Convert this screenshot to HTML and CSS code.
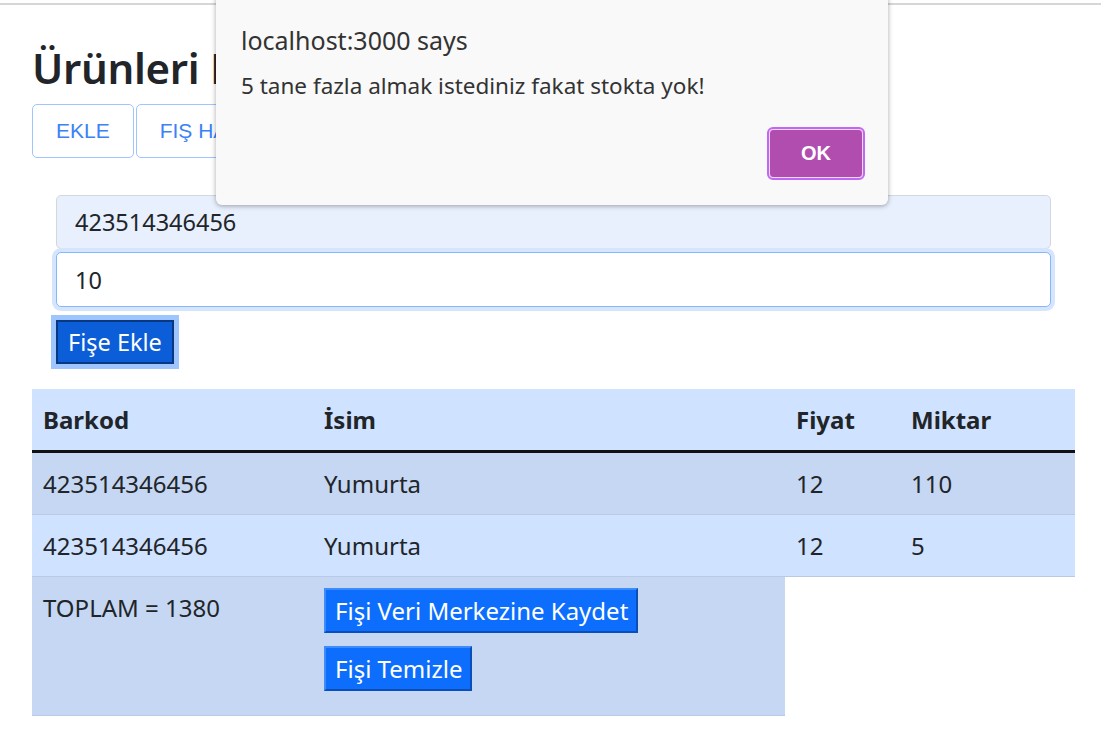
FILE: index.html
```html
<!DOCTYPE html>
<html lang="tr">
<head>
<meta charset="utf-8">
<title>Ürünleri Fişe Ekle</title>
<link rel="stylesheet" href="styles.css">
</head>
<body>
<div class="page">
  <div class="container">
    <h2 class="title">Ürünleri Fişe Ekle</h2>
    <div class="nav">
      <button class="nav-btn">EKLE</button>
      <button class="nav-btn">FIŞ HAREKETLERİ</button>
    </div>
    <form class="form">
      <input class="field field-auto" type="text" value="423514346456">
      <input class="field field-focus" type="text" value="10">
      <div class="form-actions"><button type="button" class="add-btn">Fişe Ekle</button></div>
    </form>
    <table class="receipt">
      <thead>
        <tr><th class="c-barkod">Barkod</th><th class="c-isim">İsim</th><th class="c-fiyat">Fiyat</th><th class="c-miktar">Miktar</th></tr>
      </thead>
      <tbody>
        <tr class="odd"><td>423514346456</td><td>Yumurta</td><td>12</td><td>110</td></tr>
        <tr class="even"><td>423514346456</td><td>Yumurta</td><td>12</td><td>5</td></tr>
        <tr class="odd total-row"><td>TOPLAM = 1380</td><td><div class="actions"><button class="act-btn">Fişi Veri Merkezine Kaydet</button><button class="act-btn">Fişi Temizle</button></div></td></tr>
      </tbody>
    </table>
  </div>
</div>
<div class="dialog">
  <div class="dialog-title">localhost:3000 says</div>
  <div class="dialog-msg">5 tane fazla almak istediniz fakat stokta yok!</div>
  <div class="dialog-actions"><button class="ok-btn">OK</button></div>
</div>
</body>
</html>
```
FILE: styles.css
```css
html, body {
  margin: 0;
  padding: 0;
  background: #fff;
}
body {
  font-family: "Noto Sans", "DejaVu Sans", sans-serif;
  color: #212529;
  padding-top: 3px;
}
.page {
  border-top: 2px solid #d6d6d6;
  height: 745px;
  box-sizing: border-box;
}
.container {
  padding-left: 32px;
  padding-right: 26px;
}
.title {
  margin: 30px 0 0 0;
  font-size: 42px;
  font-weight: 600;
  line-height: 66px;
  color: #212529;
  letter-spacing: -0.3px;
}
.nav {
  display: flex;
  gap: 2px;
  margin-top: 3px;
}
.nav-btn {
  font-family: "Liberation Sans", Arial, sans-serif;
  font-size: 21px;
  color: #3b82f6;
  background: #fff;
  border: 1.5px solid #9ec5fe;
  border-radius: 5px;
  height: 54px;
  padding: 0 23px;
}
.form {
  margin: 37px 24px 0 24px;
}
.field {
  display: block;
  width: 100%;
  box-sizing: border-box;
  font-family: "Noto Sans", sans-serif;
  font-size: 23.5px;
  color: #212529;
  padding: 0 18px;
  border-radius: 5px;
  outline: none;
}
.field-auto {
  height: 54px;
  background: #e8f0fe;
  border: 1.5px solid #d3d8de;
}
.field-focus {
  height: 55px;
  margin-top: 3px;
  background: #fff;
  border: 1.5px solid #86b7fe;
  box-shadow: 0 0 0 4px #d5e5fd;
}
.form-actions {
  margin-top: 8px;
  margin-left: -6px;
  display: flex;
}
.add-btn {
  font-family: "Noto Sans", sans-serif;
  font-size: 23.5px;
  color: #fff;
  background: #0b5ed7;
  border: 2px solid #0a3880;
  outline: 5px solid #9ec5fe;
  outline-offset: 0;
  margin: 5px 6px;
  padding: 0 10px;
  height: 44px;
}
.receipt {
  margin-top: 20px;
  width: 1043px;
  border-collapse: collapse;
  font-size: 24px;
}
.receipt th, .receipt td {
  text-align: left;
  padding: 12px 11px;
  line-height: 37px;
  vertical-align: top;
}
.receipt thead tr {
  background: #cfe2ff;
  border-bottom: 3px solid #111;
}
.receipt th {
  font-weight: 700;
  height: 36px;
}
.c-barkod { width: 259px; }
.c-isim { width: 450px; }
.c-fiyat { width: 93px; }
.receipt tbody tr {
  border-bottom: 1px solid #b9cae6;
}
.receipt tbody tr.odd td { background: #c5d7f2; }
.receipt tbody tr.even td { background: #cfe2ff; }
.receipt tbody tr.total-row { border-bottom: none; }
.receipt tbody tr.total-row td {
  border-bottom: 1px solid #b9cae6;
  padding-top: 11px;
  padding-bottom: 24px;
}
.receipt tbody tr.total-row td:first-child {
  padding-top: 12px;
}
.actions {
  display: flex;
  flex-direction: column;
  align-items: flex-start;
  gap: 13px;
}
.act-btn {
  font-family: "Noto Sans", sans-serif;
  font-size: 24px;
  color: #fff;
  background: #0d6efd;
  border: 2px solid;
  border-color: #3d8bfd #0a4fb8 #0a4fb8 #3d8bfd;
  height: 45px;
  padding: 0 8px 0 9px;
  line-height: 38px;
}
.dialog {
  position: absolute;
  left: 216px;
  top: -6px;
  width: 672px;
  height: 211px;
  box-sizing: border-box;
  background: #f9f9f9;
  border-radius: 6px;
  box-shadow: 0 1px 5px rgba(0,0,0,0.35);
  padding: 29px 24px 0 25px;
  color: #333;
}
.dialog-title {
  font-size: 25px;
  line-height: 34px;
}
.dialog-msg {
  font-size: 22.5px;
  line-height: 30px;
  margin-top: 14px;
}
.dialog-actions {
  display: flex;
  justify-content: flex-end;
  margin-top: 28px;
}
.ok-btn {
  font-family: "Liberation Sans", Arial, sans-serif;
  font-weight: 700;
  font-size: 20px;
  color: #fff;
  background: #b24db0;
  border: 1px solid #f2d9f7;
  outline: 2px solid #c266f4;
  border-radius: 4px;
  width: 94px;
  height: 49px;
  margin-right: 1px;
}
```
